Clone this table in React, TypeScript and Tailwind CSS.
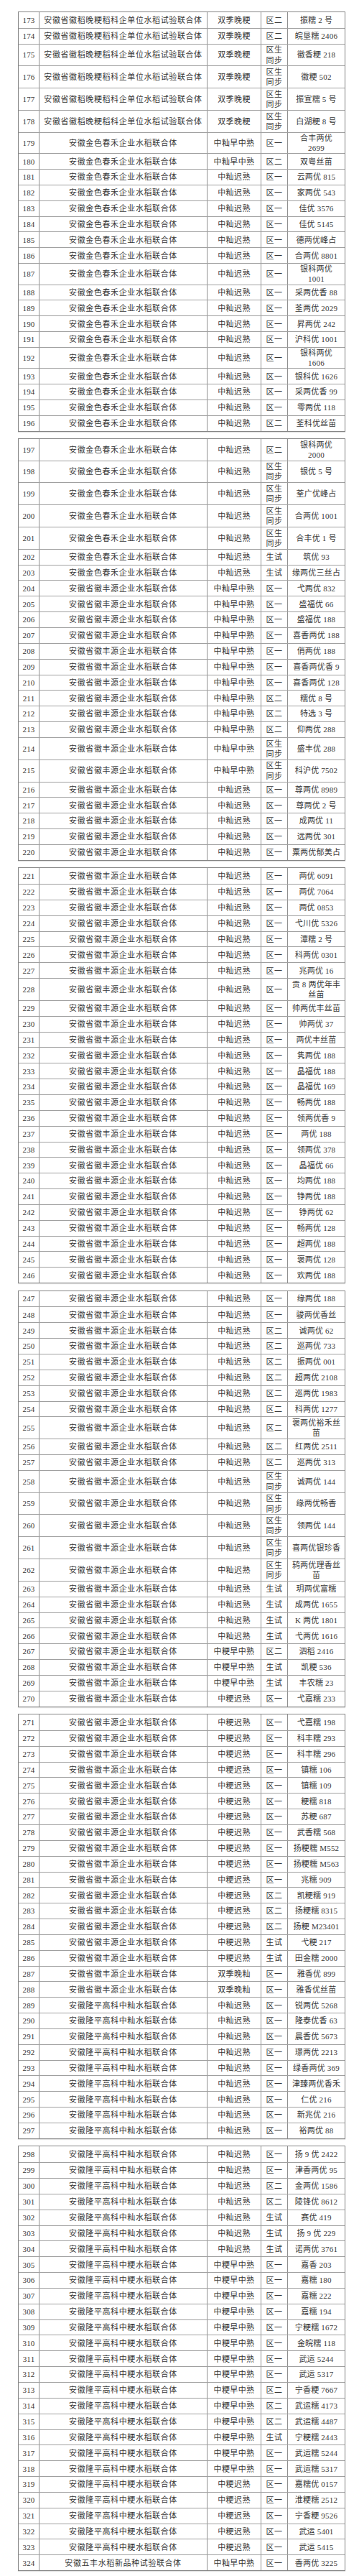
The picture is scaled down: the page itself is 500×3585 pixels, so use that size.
import React from "react";

type H = "s" | "d" | "w";
type Row = [number, string, string, string, string, H];

const A = "安徽省徽稻晚粳稻科企单位水稻试验联合体";
const B = "安徽金色春禾企业水稻联合体";
const C = "安徽省徽丰源企业水稻联合体";
const D = "安徽隆平高科中籼水稻联合体";
const E = "安徽隆平高科中粳水稻联合体";
const F = "安徽五丰水稻新品种试验联合体";

const SW = "双季晚粳";
const XZ = "中籼早中熟";
const XC = "中籼迟熟";
const JZ = "中粳早中熟";
const JC = "中粳迟熟";
const SX = "双季晚籼";
const TB = "区生\n同步";

const blocks: Row[][] = [
  [
    [173, A, SW, "区二", "振糯 2 号", "s"],
    [174, A, SW, "区二", "皖垦糯 2406", "s"],
    [175, A, SW, TB, "徽香粳 218", "d"],
    [176, A, SW, TB, "徽粳 502", "d"],
    [177, A, SW, TB, "振宣糯 5 号", "d"],
    [178, A, SW, TB, "白湖粳 8 号", "d"],
    [179, B, XZ, "区一", "合丰两优\n2699", "w"],
    [180, B, XZ, "区二", "双粤丝苗", "s"],
    [181, B, XC, "区一", "云两优 815", "s"],
    [182, B, XC, "区一", "家两优 543", "s"],
    [183, B, XC, "区一", "佳优 3576", "s"],
    [184, B, XC, "区一", "佳优 5145", "s"],
    [185, B, XC, "区一", "德两优峰占", "s"],
    [186, B, XC, "区一", "合两优 8801", "s"],
    [187, B, XC, "区一", "银科两优\n1001", "w"],
    [188, B, XC, "区一", "采两优香 88", "s"],
    [189, B, XC, "区一", "荃两优 2029", "s"],
    [190, B, XC, "区一", "昇两优 242", "s"],
    [191, B, XC, "区一", "沪科优 1001", "s"],
    [192, B, XC, "区一", "银科两优\n1606", "w"],
    [193, B, XC, "区一", "银科优 1626", "s"],
    [194, B, XC, "区一", "采两优香 99", "s"],
    [195, B, XC, "区一", "零两优 118", "s"],
    [196, B, XC, "区二", "荃科优丝苗", "s"],
  ],
  [
    [197, B, XC, "区二", "银科两优\n2000", "w"],
    [198, B, XC, TB, "银优 5 号", "d"],
    [199, B, XC, TB, "荃广优峰占", "d"],
    [200, B, XC, TB, "合两优 1001", "d"],
    [201, B, XC, TB, "合丰优 1 号", "d"],
    [202, B, XC, "生试", "筑优 93", "s"],
    [203, B, XC, "生试", "缘两优三丝占", "s"],
    [204, C, XZ, "区一", "弋两优 832", "s"],
    [205, C, XZ, "区一", "盛福优 66", "s"],
    [206, C, XZ, "区一", "盛福优 188", "s"],
    [207, C, XZ, "区一", "喜香两优 188", "s"],
    [208, C, XZ, "区一", "俏两优 188", "s"],
    [209, C, XZ, "区一", "喜香两优香 9", "s"],
    [210, C, XZ, "区一", "喜香两优 128", "s"],
    [211, C, XZ, "区二", "糯优 8 号", "s"],
    [212, C, XZ, "区二", "特选 3 号", "s"],
    [213, C, XZ, "区二", "仰两优 288", "s"],
    [214, C, XZ, TB, "盛丰优 288", "d"],
    [215, C, XZ, TB, "科沪优 7502", "d"],
    [216, C, XC, "区一", "尊两优 8989", "s"],
    [217, C, XC, "区一", "尊两优 2 号", "s"],
    [218, C, XC, "区一", "成两优 11", "s"],
    [219, C, XC, "区一", "远两优 301", "s"],
    [220, C, XC, "区一", "粟两优郁美占", "s"],
  ],
  [
    [221, C, XC, "区一", "两优 6091", "s"],
    [222, C, XC, "区一", "两优 7064", "s"],
    [223, C, XC, "区一", "两优 0853", "s"],
    [224, C, XC, "区一", "弋川优 5326", "s"],
    [225, C, XC, "区一", "潭糯 2 号", "s"],
    [226, C, XC, "区一", "科两优 0301", "s"],
    [227, C, XC, "区一", "兆两优 16", "s"],
    [228, C, XC, "区一", "贡 8 两优年丰\n丝苗", "d"],
    [229, C, XC, "区一", "帅两优丰丝苗", "s"],
    [230, C, XC, "区一", "帅两优 37", "s"],
    [231, C, XC, "区一", "两优丰丝苗", "s"],
    [232, C, XC, "区一", "隽两优 188", "s"],
    [233, C, XC, "区一", "晶福优 188", "s"],
    [234, C, XC, "区一", "晶福优 169", "s"],
    [235, C, XC, "区一", "畅两优 188", "s"],
    [236, C, XC, "区一", "领两优香 9", "s"],
    [237, C, XC, "区一", "两优 188", "s"],
    [238, C, XC, "区一", "领两优 378", "s"],
    [239, C, XC, "区一", "晶福优 66", "s"],
    [240, C, XC, "区一", "均两优 188", "s"],
    [241, C, XC, "区一", "铮两优 188", "s"],
    [242, C, XC, "区一", "铮两优 62", "s"],
    [243, C, XC, "区一", "畅两优 128", "s"],
    [244, C, XC, "区一", "超两优 188", "s"],
    [245, C, XC, "区一", "褒两优 128", "s"],
    [246, C, XC, "区一", "欢两优 188", "s"],
  ],
  [
    [247, C, XC, "区一", "缘两优 188", "s"],
    [248, C, XC, "区一", "骏两优香丝", "s"],
    [249, C, XC, "区二", "诚两优 62", "s"],
    [250, C, XC, "区二", "巡两优 733", "s"],
    [251, C, XC, "区二", "振两优 001", "s"],
    [252, C, XC, "区二", "超两优 2108", "s"],
    [253, C, XC, "区二", "巡两优 1983", "s"],
    [254, C, XC, "区二", "科两优 1277", "s"],
    [255, C, XC, "区二", "褒两优裕禾丝\n苗", "d"],
    [256, C, XC, "区二", "红两优 2511", "s"],
    [257, C, XC, "区二", "巡两优 313", "s"],
    [258, C, XC, TB, "诚两优 144", "d"],
    [259, C, XC, TB, "缘两优畅香", "d"],
    [260, C, XC, TB, "领两优 144", "d"],
    [261, C, XC, TB, "喜两优银珍香", "d"],
    [262, C, XC, TB, "鸫两优理香丝\n苗", "d"],
    [263, C, XC, "生试", "玥两优富糯", "s"],
    [264, C, XC, "生试", "成两优 1655", "s"],
    [265, C, XC, "生试", "K 两优 1801", "s"],
    [266, C, XC, "生试", "弋两优 1616", "s"],
    [267, C, JZ, "区二", "泗稻 2416", "s"],
    [268, C, JZ, "生试", "凯粳 536", "s"],
    [269, C, JZ, "生试", "丰农糯 23", "s"],
    [270, C, JC, "区一", "弋嘉糯 233", "s"],
  ],
  [
    [271, C, JC, "区一", "弋嘉糯 198", "s"],
    [272, C, JC, "区一", "科丰糯 293", "s"],
    [273, C, JC, "区一", "科丰糯 296", "s"],
    [274, C, JC, "区一", "镇糯 106", "s"],
    [275, C, JC, "区一", "镇糯 109", "s"],
    [276, C, JC, "区一", "粳糯 818", "s"],
    [277, C, JC, "区一", "苏粳 687", "s"],
    [278, C, JC, "区一", "武香糯 568", "s"],
    [279, C, JC, "区一", "扬粳糯 M552", "s"],
    [280, C, JC, "区一", "扬粳糯 M563", "s"],
    [281, C, JC, "区一", "兆糯 909", "s"],
    [282, C, JC, "区二", "凯粳糯 919", "s"],
    [283, C, JC, "区二", "扬粳糯 8315", "s"],
    [284, C, JC, "区二", "扬粳 M23401", "s"],
    [285, C, JC, "生试", "弋粳 217", "s"],
    [286, C, JC, "生试", "田金糯 2000", "s"],
    [287, C, SX, "区一", "雅香优 899", "s"],
    [288, C, SX, "区一", "雅香优丝苗", "s"],
    [289, D, XC, "区一", "锐两优 5268", "s"],
    [290, D, XC, "区一", "隆泰优香 63", "s"],
    [291, D, XC, "区一", "晨香优 5673", "s"],
    [292, D, XC, "区一", "璟两优 2213", "s"],
    [293, D, XC, "区一", "绿香两优 369", "s"],
    [294, D, XC, "区一", "津臻两优香禾", "s"],
    [295, D, XC, "区一", "仁优 216", "s"],
    [296, D, XC, "区一", "新兆优 216", "s"],
    [297, D, XC, "区一", "裕两优 88", "s"],
  ],
  [
    [298, D, XC, "区一", "扬 9 优 2422", "s"],
    [299, D, XC, "区一", "津香两优 95", "s"],
    [300, D, XC, "区二", "金两优 1586", "s"],
    [301, D, XC, "区二", "陵锋优 8612", "s"],
    [302, D, XC, "生试", "赛优 419", "s"],
    [303, D, XC, "生试", "扬 9 优 229", "s"],
    [304, D, XC, "生试", "诺两优 3761", "s"],
    [305, E, JZ, "区一", "嘉香 203", "s"],
    [306, E, JZ, "区一", "嘉糯 180", "s"],
    [307, E, JZ, "区一", "嘉糯 222", "s"],
    [308, E, JZ, "区一", "嘉糯 194", "s"],
    [309, E, JZ, "区一", "宁粳糯 1672", "s"],
    [310, E, JZ, "区一", "金皖糯 118", "s"],
    [311, E, JZ, "区一", "武运 5244", "s"],
    [312, E, JZ, "区一", "武运 5317", "s"],
    [313, E, JZ, "区二", "宁香粳 7667", "s"],
    [314, E, JZ, "区二", "武运糯 4173", "s"],
    [315, E, JZ, "区二", "武运糯 4487", "s"],
    [316, E, JZ, "生试", "宁粳糯 2443", "s"],
    [317, E, JZ, "区一", "武运糯 5244", "s"],
    [318, E, JZ, "区一", "武运糯 5317", "s"],
    [319, E, JC, "区一", "嘉糯优 0157", "s"],
    [320, E, JC, "区一", "淮粳糯 2512", "s"],
    [321, E, JC, "区一", "宁香粳 9526", "s"],
    [322, E, JC, "区一", "武运 5401", "s"],
    [323, E, JC, "区一", "武运 5415", "s"],
    [324, F, XZ, "区一", "香两优 3225", "s"],
  ],
];

const heightClass: Record<H, string> = {
  s: "h-[21.85px]",
  d: "h-[30.8px]",
  w: "h-[29.4px]",
};

const cell =
  "flex items-center justify-center text-center whitespace-pre-line leading-[14.3px]";

function Block({ rows }: { rows: Row[] }) {
  return (
    <div className="w-[456px] border border-[#858585] bg-white shadow-[0_1px_1px_rgba(0,0,0,0.12)]">
      {rows.map((r, i) => (
        <div
          key={r[0]}
          className={`grid grid-cols-[29px_234px_75px_37px_79px] ${heightClass[r[5]]} ${
            i > 0 ? "border-t border-[#a0a0a0]" : ""
          }`}
        >
          <div className={`${cell} border-r border-[#8f8f8f] tracking-[0.2px]`}>{r[0]}</div>
          <div className={`${cell} border-r border-[#8f8f8f] tracking-[0.6px]`}>{r[1]}</div>
          <div className={`${cell} border-r border-[#8f8f8f] tracking-[0.4px]`}>{r[2]}</div>
          <div className={`${cell} border-r border-[#8f8f8f] tracking-[0.5px]`}>{r[3]}</div>
          <div className={`${cell} tracking-[0.2px] px-[2px]`}>{r[4]}</div>
        </div>
      ))}
    </div>
  );
}

export default function App() {
  return (
    <div className="min-h-[3585px] w-[500px] bg-white pt-[16px] pl-[25px] text-[11px] text-[#383838] font-['Liberation_Serif','Noto_Sans_CJK_SC',serif]">
      <div className="flex flex-col gap-[9.5px]">
        {blocks.map((b, i) => (
          <Block key={i} rows={b} />
        ))}
      </div>
    </div>
  );
}
